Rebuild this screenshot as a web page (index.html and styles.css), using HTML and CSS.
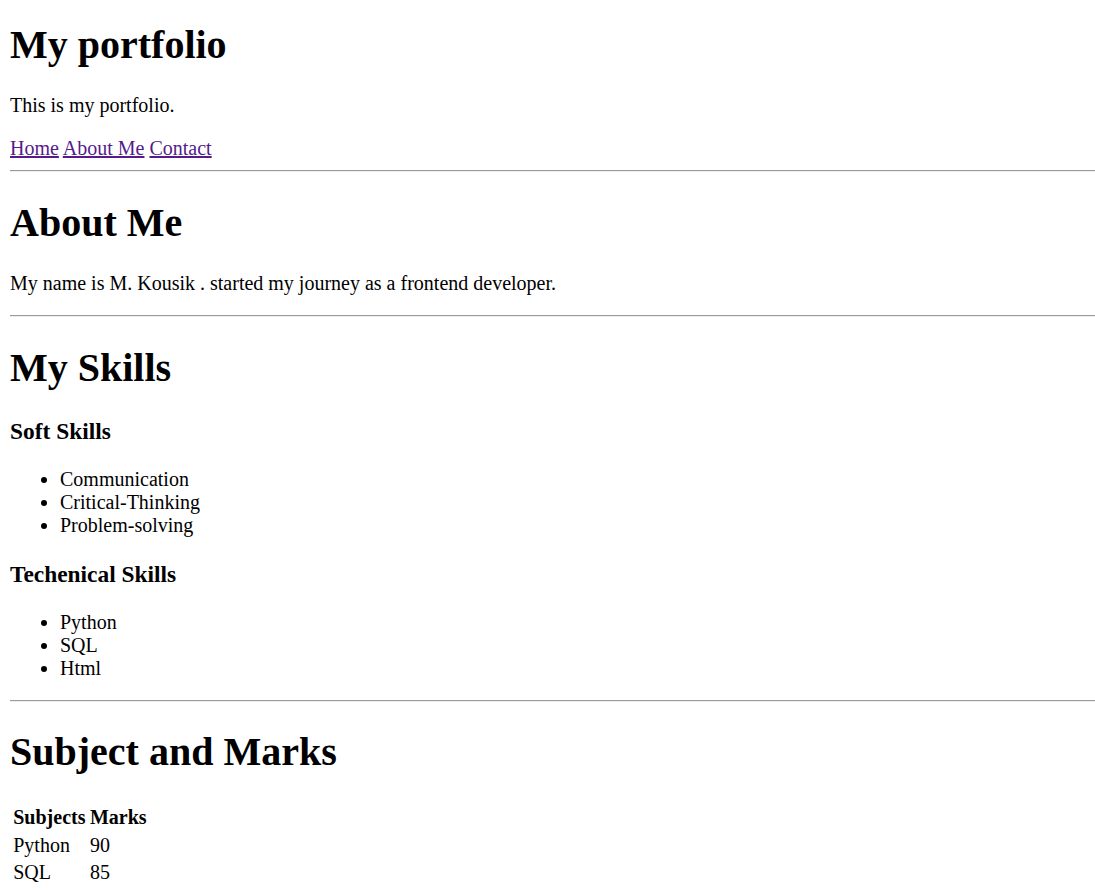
FILE: index.html
```html
<!DOCTYPE html>
<html lang="en">
<head>
<meta charset="utf-8">
<title>My portfolio</title>
<link rel="stylesheet" href="styles.css">
</head>
<body class="page">
<h1 class="title first">My portfolio</h1>
<p class="text">This is my portfolio.</p>
<a class="link" href="#home">Home</a>
<a class="link" href="#about">About Me</a>
<a class="link" href="#contact">Contact</a>
<hr class="rule">
<h1 class="title" id="about">About Me</h1>
<p class="text">My name is M. Kousik . started my journey as a frontend developer.</p>
<hr class="rule">
<h1 class="title">My Skills</h1>
<h3 class="subtitle">Soft Skills</h3>
<ul class="list">
<li>Communication</li>
<li>Critical-Thinking</li>
<li>Problem-solving</li>
</ul>
<h3 class="subtitle">Techenical Skills</h3>
<ul class="list">
<li>Python</li>
<li>SQL</li>
<li>Html</li>
</ul>
<hr class="rule">
<h1 class="title">Subject and Marks</h1>
<table class="marks">
<tr><th>Subjects</th><th>Marks</th></tr>
<tr><td>Python</td><td>90</td></tr>
<tr><td>SQL</td><td>85</td></tr>
</table>
</body>
</html>
```

FILE: styles.css
```css
html {
  background: #fff;
}
.page {
  margin: 0 0 0 10px;
  font-family: "Liberation Serif", "Times New Roman", serif;
  font-size: 20px;
  line-height: normal;
  color: #000;
}
.title {
  font-size: 40px;
  font-weight: bold;
  margin: 26.8px 0;
}
.title.first {
  margin-top: 20.7px;
}
.subtitle {
  font-size: 23.4px;
  font-weight: bold;
  margin: 23.4px 0 22.4px;
  padding-top: 1px;
}
.text {
  margin: 20px 0 19.4px;
}
.link {
  color: #551a8b;
  text-decoration: underline;
}
.rule {
  margin: 10px 0;
  height: 0;
  border: 0;
  border-top: 1px solid #9a9a9a;
  border-bottom: 1px solid #eeeeee;
}
.list {
  margin: 20px 0;
  padding-left: 50px;
}
.marks {
  margin-top: 27.8px;
  border-spacing: 2.5px;
  border-collapse: separate;
  font-size: 20px;
}
.marks th,
.marks td {
  padding: 1.25px;
  text-align: left;
}
.marks th {
  font-weight: bold;
}
```
